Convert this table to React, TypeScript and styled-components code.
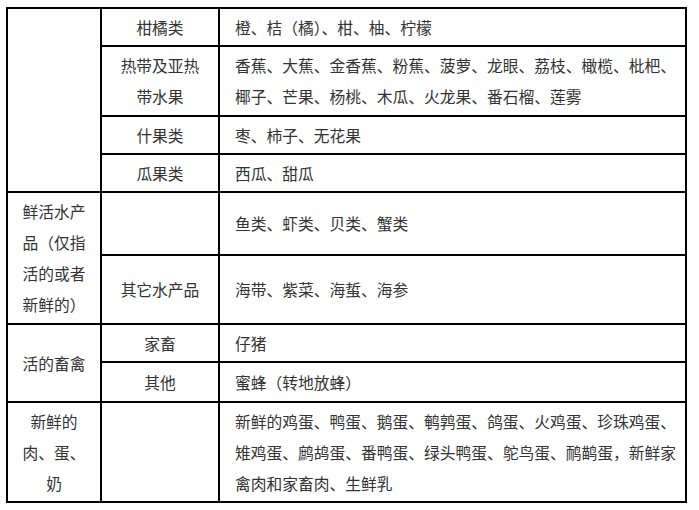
import styled, { createGlobalStyle } from "styled-components";

const GlobalStyle = createGlobalStyle`
  html, body {
    margin: 0;
    background: #ffffff;
  }
`;

const Page = styled.div`
  padding: 7px 0 0 6px;
`;

const Table = styled.table`
  border-collapse: collapse;
  table-layout: fixed;
  width: 681px;
  font-family: "Noto Sans CJK SC", "Noto Sans", sans-serif;
  font-size: 15.75px;
  line-height: 31px;
  color: #333333;
`;

const Row = styled.tr<{ h: number }>`
  height: ${({ h }) => h}px;
`;

const Cell = styled.td<{ left?: boolean }>`
  border: 2px solid #000;
  padding: ${({ left }) => (left ? "0 4px 0 15px" : "0")};
  text-align: ${({ left }) => (left ? "left" : "center")};
  vertical-align: middle;
  white-space: nowrap;
`;

type Item = { sub: string; text: string[] };

const fruits: Item[] = [
  { sub: "柑橘类", text: ["橙、桔（橘）、柑、柚、柠檬"] },
  {
    sub: "热带及亚热\n带水果",
    text: [
      "香蕉、大蕉、金香蕉、粉蕉、菠萝、龙眼、荔枝、橄榄、枇杷、",
      "椰子、芒果、杨桃、木瓜、火龙果、番石榴、莲雾",
    ],
  },
  { sub: "什果类", text: ["枣、柿子、无花果"] },
  { sub: "瓜果类", text: ["西瓜、甜瓜"] },
];

const heights = [38, 70, 38, 38];

const Lines = ({ value }: { value: string[] }) => (
  <>
    {value.map((line, i) => (
      <span key={i}>
        {line}
        {i < value.length - 1 && <br />}
      </span>
    ))}
  </>
);

export default function App() {
  return (
    <>
      <GlobalStyle />
      <Page>
        <Table>
          <colgroup>
            <col style={{ width: 94 }} />
            <col style={{ width: 118 }} />
            <col style={{ width: 467 }} />
          </colgroup>
          <tbody>
            {fruits.map((item, i) => (
              <Row h={heights[i]} key={item.sub}>
                {i === 0 && <Cell rowSpan={4} />}
                <Cell>
                  <Lines value={item.sub.split("\n")} />
                </Cell>
                <Cell left>
                  <Lines value={item.text} />
                </Cell>
              </Row>
            ))}
            <Row h={63}>
              <Cell rowSpan={2}>
                <Lines value={["鲜活水产", "品（仅指", "活的或者", "新鲜的）"]} />
              </Cell>
              <Cell />
              <Cell left>鱼类、虾类、贝类、蟹类</Cell>
            </Row>
            <Row h={69}>
              <Cell>其它水产品</Cell>
              <Cell left>海带、紫菜、海蜇、海参</Cell>
            </Row>
            <Row h={38}>
              <Cell rowSpan={2}>活的畜禽</Cell>
              <Cell>家畜</Cell>
              <Cell left>仔猪</Cell>
            </Row>
            <Row h={40}>
              <Cell>其他</Cell>
              <Cell left>蜜蜂（转地放蜂）</Cell>
            </Row>
            <Row h={100}>
              <Cell>
                <Lines value={["新鲜的", "肉、蛋、", "奶"]} />
              </Cell>
              <Cell />
              <Cell left>
                <Lines
                  value={[
                    "新鲜的鸡蛋、鸭蛋、鹅蛋、鹌鹑蛋、鸽蛋、火鸡蛋、珍珠鸡蛋、",
                    "雉鸡蛋、鹧鸪蛋、番鸭蛋、绿头鸭蛋、鸵鸟蛋、鸸鹋蛋，新鲜家",
                    "禽肉和家畜肉、生鲜乳",
                  ]}
                />
              </Cell>
            </Row>
          </tbody>
        </Table>
      </Page>
    </>
  );
}
